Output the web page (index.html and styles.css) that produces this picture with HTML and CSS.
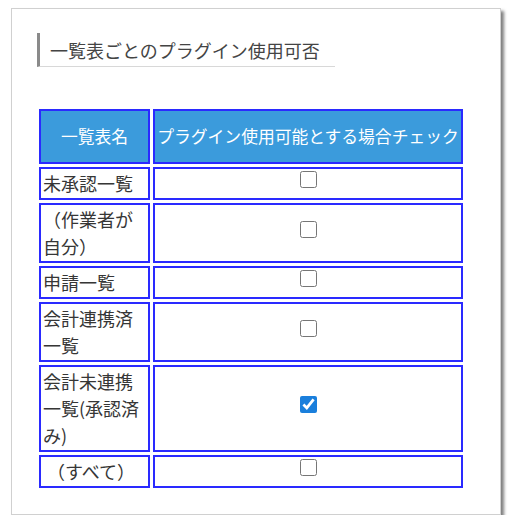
FILE: index.html
```html
<!DOCTYPE html>
<html lang="ja">
  <head>
    <meta charset="UTF-8" />
    <meta name="viewport" content="width=device-width, initial-scale=1.0" />
    <title>プラグイン設定</title>

    <link rel="stylesheet" href="styles.css">
  </head>
  <body>
    <div class="panel">
      <h2 class="sectionTitle">一覧表ごとのプラグイン使用可否</h2>

      <table class="pluginTable">
        <thead>
          <tr>
            <th class="nameCol">一覧表名</th>
            <th class="checkCol">プラグイン使用可能とする場合チェック</th>
          </tr>
        </thead>
        <tbody>
          <tr>
            <td>未承認一覧</td>
            <td class="check"><input type="checkbox" /></td>
          </tr>
          <tr>
            <td>（作業者が自分）</td>
            <td class="check"><input type="checkbox" /></td>
          </tr>
          <tr>
            <td>申請一覧</td>
            <td class="check"><input type="checkbox" /></td>
          </tr>
          <tr>
            <td>会計連携済一覧</td>
            <td class="check"><input type="checkbox" /></td>
          </tr>
          <tr>
            <td>会計未連携一覧(承認済み)</td>
            <td class="check"><input type="checkbox" checked /></td>
          </tr>
          <tr>
            <td>&nbsp;（すべて）</td>
            <td class="check"><input type="checkbox" /></td>
          </tr>
        </tbody>
      </table>
    </div>
  </body>
</html>
```

FILE: styles.css
```css
* {
  margin: 0;
  padding: 0;
  box-sizing: border-box;
  font-family: "Noto Sans CJK JP", "Noto Sans", sans-serif;
}

body {
  background: #fff;
  padding: 8px 0 0 11px;
}

.panel {
  width: 490px;
  height: 507px;
  background: #fff;
  border: 1px solid #d0d0d0;
  box-shadow: 3px 3px 3px rgba(0, 0, 0, 0.5);
  padding: 24px 0 0 25px;
}

.sectionTitle {
  width: max-content;
  font-size: 18px;
  font-weight: normal;
  line-height: 26px;
  color: #444;
  border-left: 3px solid #8a8a8a;
  border-bottom: 1px solid #d8d8d8;
  padding: 4px 15px 3px 10px;
  margin-bottom: 39px;
}

.pluginTable {
  table-layout: fixed;
  width: 430px;
  border-collapse: separate;
  border-spacing: 3px;
  margin-left: -1px;
}

.pluginTable th,
.pluginTable td {
  border: 2px solid #2a2aff;
}

.pluginTable th {
  background: #3b9bdc;
  color: #fff;
  font-size: 16.8px;
  font-weight: normal;
  line-height: 25px;
  padding: 13px 0;
  text-align: center;
  white-space: nowrap;
}

.nameCol {
  width: 111px;
}

.checkCol {
  width: 310px;
}

.pluginTable td {
  font-size: 18px;
  line-height: 27px;
  color: #363636;
  padding: 1px 2px;
  vertical-align: middle;
}

.check input {
  display: block;
  width: 17px;
  height: 17px;
  margin: 0 auto 8px;
  accent-color: #1a7fdc;
}
```
